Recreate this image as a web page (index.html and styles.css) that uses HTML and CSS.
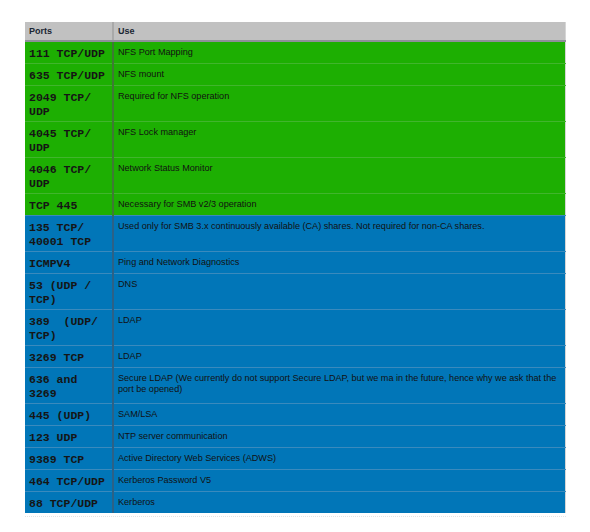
FILE: index.html
```html
<!DOCTYPE html>
<html>
<head>
<meta charset="utf-8">
<link rel="stylesheet" href="styles.css">
</head>
<body>
<div class="wrap">
<table class="ports">
  <thead>
    <tr><th class="c-port">Ports</th><th class="c-use">Use</th></tr>
  </thead>
  <tbody>
    <tr class="g"><td class="port">111 TCP/UDP</td><td class="use">NFS Port Mapping</td></tr>
    <tr class="g"><td class="port">635 TCP/UDP</td><td class="use">NFS mount</td></tr>
    <tr class="g"><td class="port">2049 TCP/<br>UDP</td><td class="use">Required for NFS operation</td></tr>
    <tr class="g"><td class="port">4045 TCP/<br>UDP</td><td class="use">NFS Lock manager</td></tr>
    <tr class="g"><td class="port">4046 TCP/<br>UDP</td><td class="use">Network Status Monitor</td></tr>
    <tr class="g"><td class="port">TCP 445</td><td class="use">Necessary for SMB v2/3 operation</td></tr>
    <tr class="b"><td class="port">135 TCP/<br>40001 TCP</td><td class="use">Used only for SMB 3.x continuously available (CA) shares. Not required for non-CA shares.</td></tr>
    <tr class="b"><td class="port">ICMPV4</td><td class="use">Ping and Network Diagnostics</td></tr>
    <tr class="b"><td class="port">53 (UDP /<br>TCP)</td><td class="use">DNS</td></tr>
    <tr class="b"><td class="port">389&nbsp; (UDP/<br>TCP)</td><td class="use">LDAP</td></tr>
    <tr class="b"><td class="port">3269 TCP</td><td class="use">LDAP</td></tr>
    <tr class="b"><td class="port">636 and<br>3269</td><td class="use">Secure LDAP (We currently do not support Secure LDAP, but we ma in the future, hence why we ask that the port be opened)</td></tr>
    <tr class="b"><td class="port">445 (UDP)</td><td class="use">SAM/LSA</td></tr>
    <tr class="b"><td class="port">123 UDP</td><td class="use">NTP server communication</td></tr>
    <tr class="b"><td class="port">9389 TCP</td><td class="use">Active Directory Web Services (ADWS)</td></tr>
    <tr class="b"><td class="port">464 TCP/UDP</td><td class="use">Kerberos Password V5</td></tr>
    <tr class="b"><td class="port">88 TCP/UDP</td><td class="use">Kerberos</td></tr>
  </tbody>
</table>
<div class="after"></div>
</div>
</body>
</html>
```
FILE: styles.css
```css
html, body {
  margin: 0;
  padding: 0;
  background: #ffffff;
}
.wrap {
  padding: 22px 0 0 25px;
}
.ports {
  width: 541px;
  border-collapse: collapse;
  border-right: 1px solid #d6d6d6;
  font-family: "Liberation Sans", Arial, sans-serif;
  color: #111;
}
.after {
  width: 541px;
  height: 0;
  margin-top: 3px;
  border-top: 1px dotted #e4e4e4;
}
.ports th {
  background: #c1c1c1;
  height: 18px;
  padding: 0 4px;
  text-align: left;
  vertical-align: middle;
  font-size: 9px;
  font-weight: bold;
  color: #1b2633;
  border-bottom: 2px solid #8f8f99;
}
.ports th.c-port {
  width: 79px;
  border-right: 2px solid #a9a9a9;
}
.ports td {
  vertical-align: top;
  padding: 5px 4px 2px 4px;
}
.ports td.port {
  width: 79px;
  font-family: "Liberation Mono", "Courier New", monospace;
  font-weight: bold;
  font-size: 11.5px;
  line-height: 14px;
  color: #151515;
  white-space: nowrap;
}
.ports td.use {
  font-size: 9.1px;
  line-height: 11px;
  padding-top: 5px;
  padding-left: 4px;
  padding-right: 2px;
}
.ports tr.g td {
  background: #1daf02;
  border-top: 1px solid #41b52d;
}
.ports tr.g td.port {
  border-right: 2px solid #3e7a34;
}
.ports tr.b td {
  background: #0176b8;
  border-top: 1px solid #3a8abd;
}
.ports tr.b td.port {
  border-right: 2px solid #2c6186;
}
.ports tbody tr:first-child td {
  border-top: none;
}
```
